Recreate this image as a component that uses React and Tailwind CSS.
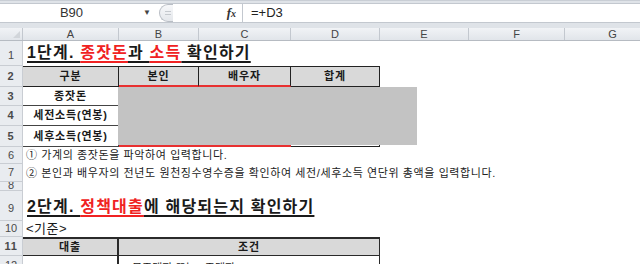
const font = { fontFamily: "'Liberation Sans','Noto Sans CJK KR',sans-serif" };

const cols = [
  { name: "A", w: "w-[96px]" },
  { name: "B", w: "w-[80px]" },
  { name: "C", w: "w-[92px]" },
  { name: "D", w: "w-[89px]" },
  { name: "E", w: "w-[89px]" },
  { name: "F", w: "w-[96px]" },
  { name: "G", w: "w-[96px]" },
];

const RowHead = ({ n, align = "items-center" }) => (
  <div className={`w-[23px] shrink-0 bg-[#e9ecf0] border-r border-b border-[#c9cdd3] text-[11px] text-[#4a4a4a] flex ${align} justify-center`}>
    {n}
  </div>
);

const Title = ({ parts }) => (
  <div className="pl-[4px] text-[16px] font-bold whitespace-nowrap tracking-[1.2px]">
    {parts.map(([t, red], i) => (
      <span
        key={i}
        className={`underline decoration-[1.5px] underline-offset-[3px] ${red ? "text-[#f02222]" : "text-[#1a1a1a]"}`}
      >
        {t}
      </span>
    ))}
  </div>
);

export default function App() {
  return (
    <div className="w-[640px] h-[264px] overflow-hidden bg-white text-[#1a1a1a]" style={font}>
      {/* formula bar */}
      <div className="h-[28px] bg-[#dfe3e8] border-t border-[#c9ced5] flex flex-col">
        <div className="mt-[2px] h-[20px] flex bg-white border-y border-[#c3c8cf]">
          <div className="w-[157px] flex items-center">
            <div className="w-[143px] text-center text-[13px] text-[#333]">B90</div>
            <div className="text-[8px] text-[#444]">▼</div>
          </div>
          <div className="w-[86px] flex items-center border-r border-[#c3c8cf]">
            <div className="ml-[2px] w-[14px] h-[18px] rounded-l-full border border-r-0 border-[#b9bec5] bg-gradient-to-b from-[#f7f8fa] to-[#e4e7eb] flex items-center justify-end pr-[2px]">
              <div className="w-[6px] h-[4px] border-y border-[#c5c9ce]" />
            </div>
            <div className="ml-auto mr-[6px] text-[13px] italic font-bold text-[#333]" style={{ fontFamily: "'Liberation Serif',serif" }}>
              f<span className="text-[10px]">x</span>
            </div>
          </div>
          <div className="flex-1 flex items-center pl-[8px] text-[13px] text-[#222]">=+D3</div>
        </div>
      </div>

      {/* column headers */}
      <div className="h-[13px] flex bg-gradient-to-b from-[#f1f3f6] to-[#e1e5ea] border-b border-[#b6bbc2]">
        <div className="w-[23px] shrink-0 border-r border-[#c3c8cf] flex items-end justify-end p-[2px]">
          <div className="w-0 h-0 border-l-[7px] border-l-transparent border-b-[7px] border-b-[#d1d5da]" />
        </div>
        {cols.map((c) => (
          <div key={c.name} className={`${c.w} shrink-0 border-r border-[#c3c8cf] text-[11px] leading-[12px] text-[#444] text-center`}>
            {c.name}
          </div>
        ))}
      </div>

      {/* row 1 */}
      <div className="h-[25px] flex">
        <RowHead n={1} align="items-end pb-[2px]" />
        <div className="flex items-end pb-[1px]">
          <Title parts={[["1단계. "], ["종잣돈", true], ["과 "], ["소득", true], [" 확인하기"]]} />
        </div>
      </div>

      {/* row 2 */}
      <div className="h-[21px] flex text-[11px] font-bold tracking-[0.8px]">
        <RowHead n={2} />
        <div className="w-[96px] shrink-0 bg-[#d9d9d9] border-t border-r border-b border-[#222] flex items-center justify-center">구분</div>
        <div className="w-[80px] shrink-0 bg-[#d9d9d9] border-t border-r border-[#222] border-b-2 border-b-[#e83030] flex items-center justify-center">본인</div>
        <div className="w-[92px] shrink-0 bg-[#d9d9d9] border-t border-r border-[#222] border-b-2 border-b-[#e83030] flex items-center justify-center">배우자</div>
        <div className="w-[89px] shrink-0 bg-[#d9d9d9] border-t border-r border-b border-[#222] flex items-center justify-center">합계</div>
      </div>

      {/* rows 3-5 */}
      <div className="relative">
        {[
          ["3", "종잣돈", "h-[19px]"],
          ["4", "세전소득(연봉)", "h-[20px]"],
          ["5", "세후소득(연봉)", "h-[21px]"],
        ].map(([n, label, h]) => (
          <div key={n} className={`${h} flex text-[11px] font-bold tracking-[0.8px]`}>
            <RowHead n={n} />
            <div className="w-[96px] shrink-0 border-r border-b border-[#444] flex items-center justify-center">{label}</div>
            <div className={`w-[172px] shrink-0 ${n === "5" ? "border-b-2 border-[#e83030]" : ""}`} />
            <div className={`w-[89px] shrink-0 border-r border-[#222] ${n === "5" ? "border-b" : ""}`} />
          </div>
        ))}
        <div className="absolute left-[118px] top-0 w-[299px] h-[58px] bg-[#c3c3c3]" />
      </div>

      {/* rows 6-7 */}
      <div className="h-[17px] flex">
        <RowHead n={6} />
        <div className="pl-[3px] flex items-center text-[11px] tracking-[0.6px] whitespace-nowrap text-[#222]">① 가계의 종잣돈을 파악하여 입력합니다.</div>
      </div>
      <div className="h-[18px] flex">
        <RowHead n={7} />
        <div className="pl-[3px] flex items-center text-[11px] tracking-[0.6px] whitespace-nowrap text-[#222]">
          ② 본인과 배우자의 전년도 원천징수영수증을 확인하여 세전/세후소득 연단위 총액을 입력합니다.
        </div>
      </div>

      {/* row 8 */}
      <div className="h-[9px] flex overflow-hidden">
        <div className="w-[23px] shrink-0 bg-[#e9ecf0] border-r border-b border-[#c9cdd3] text-[11px] leading-[9px] text-[#4a4a4a] text-center overflow-hidden">
          <div className="-mt-[1px]">8</div>
        </div>
      </div>

      {/* row 9 */}
      <div className="h-[30px] flex">
        <RowHead n={9} align="items-center pt-[6px]" />
        <div className="flex items-center pt-[1px]">
          <Title parts={[["2단계. "], ["정책대출", true], ["에 해당되는지 확인하기"]]} />
        </div>
      </div>

      {/* row 10 */}
      <div className="h-[16px] flex">
        <RowHead n={10} />
        <div className="pl-[3px] flex items-center text-[13px] tracking-[0.5px] text-[#1a1a1a]">&lt;기준&gt;</div>
      </div>

      {/* row 11 */}
      <div className="h-[19px] flex text-[11px] font-bold tracking-[0.8px]">
        <RowHead n={11} />
        <div className="w-[96px] shrink-0 bg-[#d9d9d9] border-t-2 border-r-2 border-b border-[#2a2a2a] flex items-center justify-center">대출</div>
        <div className="w-[261px] shrink-0 bg-[#d9d9d9] border-t-2 border-r border-b border-[#2a2a2a] flex items-center justify-center">조건</div>
      </div>

      {/* row 12 */}
      <div className="h-[20px] flex text-[11px]">
        <RowHead n={12} />
        <div className="w-[96px] shrink-0 border-r-2 border-[#2a2a2a]" />
        <div className="w-[261px] shrink-0 border-r border-[#2a2a2a] pl-[6px] pt-[4px] whitespace-nowrap">• 무주택자 또는 1주택자</div>
      </div>
    </div>
  );
}
